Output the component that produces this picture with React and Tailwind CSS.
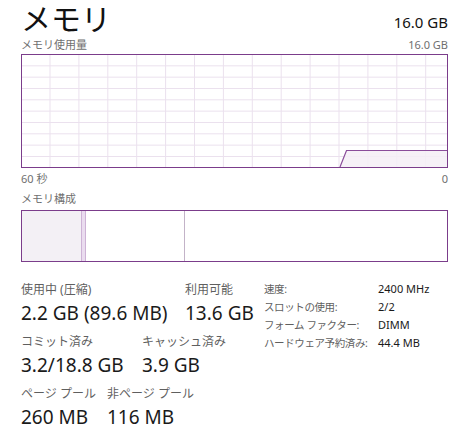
import React from "react";

const FONT = { fontFamily: '"Noto Sans", "Noto Sans CJK JP", sans-serif' };

function UsageGraph() {
  const W = 425;
  const H = 112;
  const vx = Array.from({ length: 14 }, (_, i) => 28 + 28.9 * i);
  const hy = Array.from({ length: 9 }, (_, k) => 11.33 * (k + 1) - 0.5);
  return (
    <div className="border border-[#7b3d8b] h-[114px] w-full">
      <svg width={W} height={H} viewBox={`0 0 ${W} ${H}`} className="block">
        {vx.map((x, i) => (
          <line key={"v" + i} x1={x} y1={0} x2={x} y2={H} stroke="#ebe1ee" strokeWidth="1" />
        ))}
        {hy.map((y, i) => (
          <line key={"h" + i} x1={0} y1={y} x2={W} y2={y} stroke="#ebe1ee" strokeWidth="1" />
        ))}
        <polygon points={`318,${H} 324.5,95.5 ${W},95.5 ${W},${H}`} fill="#f4eef6" fillOpacity="0.85" />
        <polyline points={`318,${H} 324.5,95.5 ${W},95.5`} fill="none" stroke="#8a4d9a" strokeWidth="1.2" />
      </svg>
    </div>
  );
}

function CompositionBar() {
  return (
    <div className="border border-[#7b3d8b] h-[52px] w-full flex">
      <div className="w-[60px] bg-[#f3f0f5] border-r border-[#cdb2d5]" />
      <div className="w-[4px] bg-[#eadcef] border-r border-[#cdb2d5]" />
      <div className="w-[99px] border-r border-[#c3b3c8]" />
      <div className="flex-1" />
    </div>
  );
}

function Stat({ label, value, className = "" }) {
  return (
    <div className={"flex flex-col " + className}>
      <div className="text-[12px] leading-[16px] text-[#5f5f5f]">{label}</div>
      <div className="text-[19px] leading-[24px] text-[#1a1a1a] mt-[3px]">{value}</div>
    </div>
  );
}

export default function App() {
  return (
    <div className="w-[461px] h-[440px] bg-white pl-[21px] pr-[13px] overflow-hidden" style={FONT}>
      <div className="flex items-end justify-between h-[37px]">
        <div className="text-[30px] leading-[36px] text-[#111]">メモリ</div>
        <div className="text-[15px] leading-[20px] text-[#111] mb-[5px]">16.0 GB</div>
      </div>
      <div className="flex justify-between text-[11px] leading-[15px] text-[#6f6f6f]">
        <span>メモリ使用量</span>
        <span>16.0 GB</span>
      </div>
      <div className="mt-[2px]">
        <UsageGraph />
      </div>
      <div className="flex justify-between text-[11px] leading-[15px] text-[#6f6f6f] mt-[3px]">
        <span>60 秒</span>
        <span>0</span>
      </div>
      <div className="text-[11px] leading-[15px] text-[#6f6f6f] mt-[5px]">メモリ構成</div>
      <div className="mt-[4px]">
        <CompositionBar />
      </div>

      <div className="flex mt-[20px]">
        <div className="w-[243px] flex flex-col gap-[9px]">
          <div className="flex">
            <Stat label="使用中 (圧縮)" value="2.2 GB (89.6 MB)" className="w-[164px]" />
            <Stat label="利用可能" value="13.6 GB" />
          </div>
          <div className="flex">
            <Stat label="コミット済み" value="3.2/18.8 GB" className="w-[121px]" />
            <Stat label="キャッシュ済み" value="3.9 GB" />
          </div>
          <div className="flex">
            <Stat label="ページ プール" value="260 MB" className="w-[86px]" />
            <Stat label="非ページ プール" value="116 MB" />
          </div>
        </div>
        <div className="flex flex-col text-[11px] leading-[18px] text-[#1a1a1a] -mt-[2px]">
          {[
            ["速度:", "2400 MHz"],
            ["スロットの使用:", "2/2"],
            ["フォーム ファクター:", "DIMM"],
            ["ハードウェア予約済み:", "44.4 MB"],
          ].map(([k, v]) => (
            <div key={k} className="flex">
              <span className="w-[114px] text-[#5f5f5f] text-[10.5px] tracking-[-0.4px] whitespace-nowrap">{k}</span>
              <span>{v}</span>
            </div>
          ))}
        </div>
      </div>
    </div>
  );
}
